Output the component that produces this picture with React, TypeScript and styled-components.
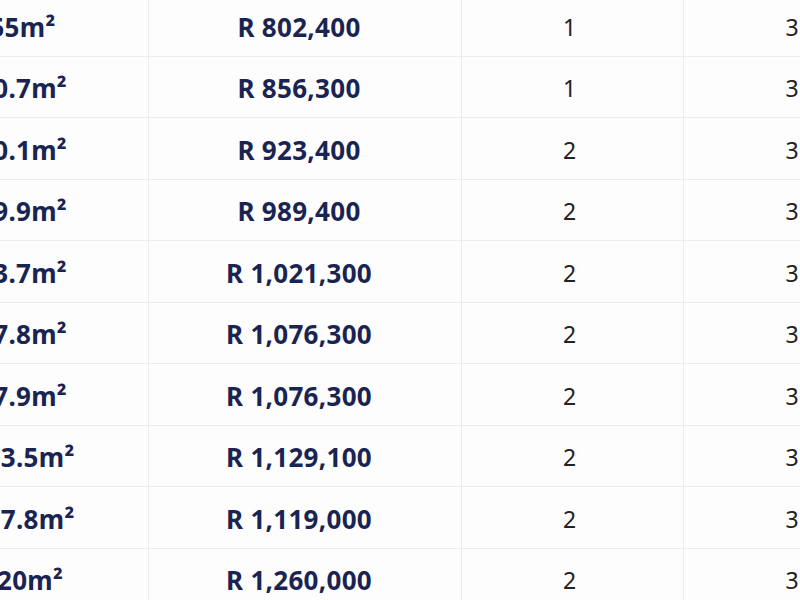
import styled, { createGlobalStyle } from 'styled-components'

const GlobalStyle = createGlobalStyle`
  html, body {
    margin: 0;
    padding: 0;
    background: #fdfdfd;
    overflow: hidden;
  }
`

const Viewport = styled.div`
  height: 600px;
  overflow: hidden;
  width: 800px;
`

const Table = styled.div`
  display: grid;
  font-family: "Noto Sans", "Open Sans", sans-serif;
  grid-auto-rows: 61.5px;
  grid-template-columns: 252px 313px 222px 222px;
  margin: -5px 0 0 -103px;
`

const Cell = styled.div<{ $strong?: boolean; $shift?: number; $last?: boolean }>`
  align-items: center;
  border-bottom: 1px solid #ececec;
  border-right: ${({ $last }) => ($last ? 'none' : '1px solid #ececec')};
  box-sizing: border-box;
  color: ${({ $strong }) => ($strong ? '#1a2452' : '#222')};
  display: flex;
  font-size: ${({ $strong }) => ($strong ? '26px' : '23px')};
  font-weight: ${({ $strong }) => ($strong ? 700 : 400)};
  justify-content: center;
  letter-spacing: ${({ $strong }) => ($strong ? '0.3px' : '0')};
  padding-right: ${({ $shift = 0 }) => `${$shift}px`};
  padding-top: 3px;
`

const rows = [
  ['55m²', 'R 802,400', '1', '3'],
  ['60.7m²', 'R 856,300', '1', '3'],
  ['60.1m²', 'R 923,400', '2', '3'],
  ['69.9m²', 'R 989,400', '2', '3'],
  ['73.7m²', 'R 1,021,300', '2', '3'],
  ['77.8m²', 'R 1,076,300', '2', '3'],
  ['77.9m²', 'R 1,076,300', '2', '3'],
  ['103.5m²', 'R 1,129,100', '2', '3'],
  ['107.8m²', 'R 1,119,000', '2', '3'],
  ['120m²', 'R 1,260,000', '2', '3'],
]

export default function App() {
  return (
    <>
      <GlobalStyle />
      <Viewport>
        <Table>
          {rows.map(([size, price, bed, bath], i) => (
            <div key={i} style={{ display: 'contents' }}>
              <Cell $strong>{size}</Cell>
              <Cell $strong $shift={12}>{price}</Cell>
              <Cell $shift={6}>{bed}</Cell>
              <Cell $shift={6} $last>{bath}</Cell>
            </div>
          ))}
        </Table>
      </Viewport>
    </>
  )
}
